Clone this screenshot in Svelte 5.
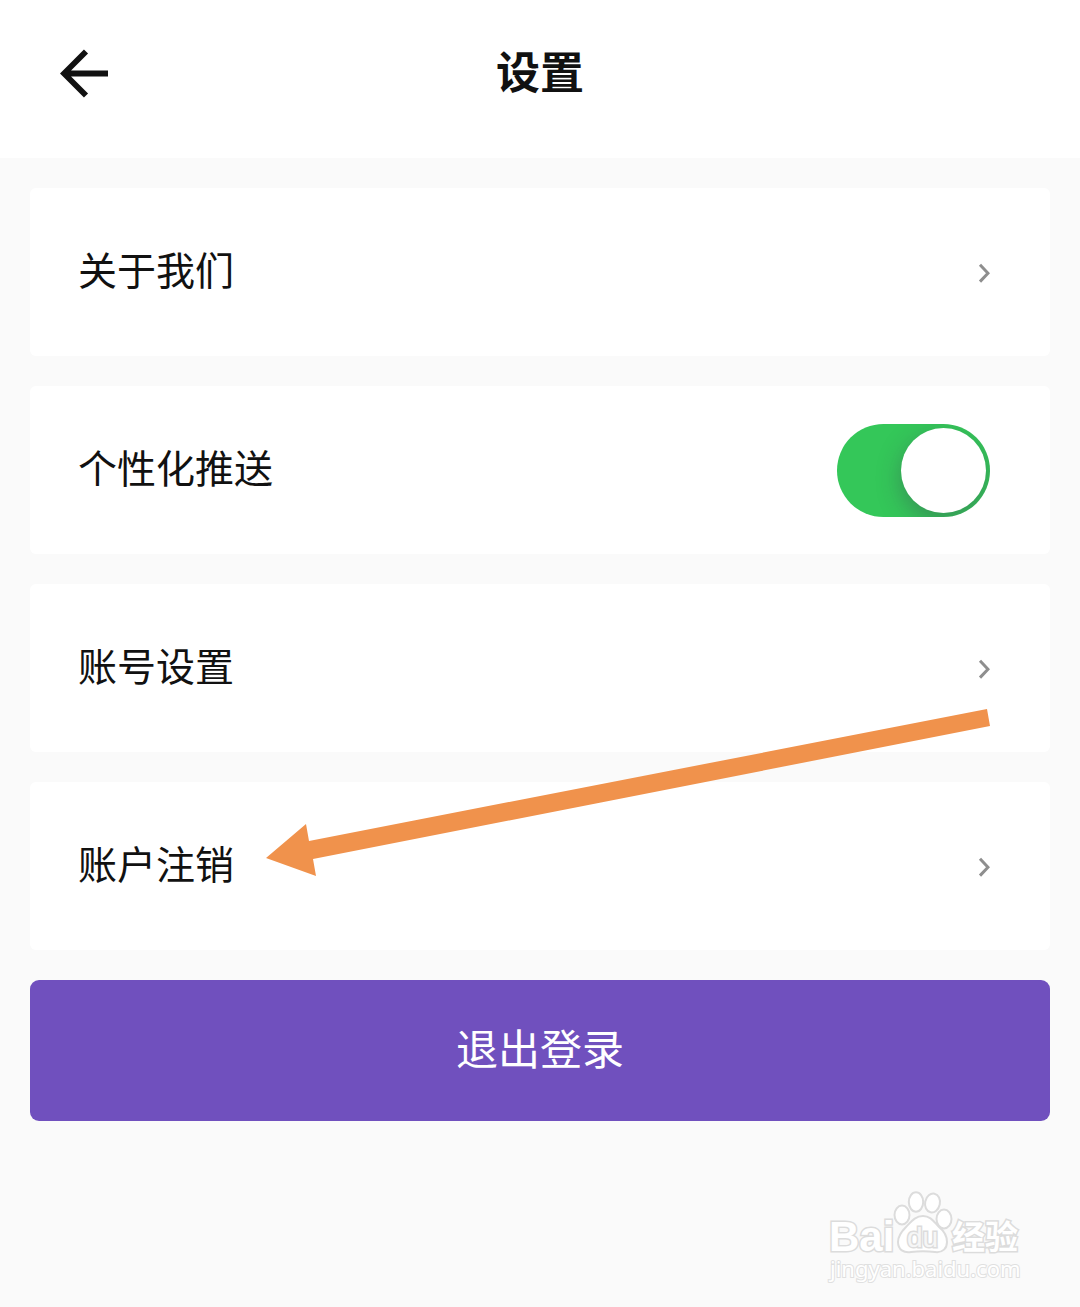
<script>
  let push = $state(true);
</script>

{#snippet linkRow(label)}
  <a class="row" href="#settings">
    <span>{label}</span>
    <svg class="chevron" width="14" height="24" viewBox="0 0 14 24" aria-hidden="true">
      <path d="M4 4.8 L12 13.2 L4 21.6" fill="none" stroke="#8e8e8e" stroke-width="3" />
    </svg>
  </a>
{/snippet}

<div class="page">
  <header>
    <button class="back" aria-label="返回">
      <svg width="50" height="50" viewBox="0 0 50 50" aria-hidden="true">
        <path d="M26 2.5 L4 24.5 L26 46.5 M4.5 24.5 H48" fill="none" stroke="#111" stroke-width="5.8" />
      </svg>
    </button>
    <h1>设置</h1>
  </header>

  <main>
    {@render linkRow('关于我们')}

    <label class="row">
      <span>个性化推送</span>
      <input class="switch" type="checkbox" role="switch" bind:checked={push} />
    </label>

    {@render linkRow('账号设置')}
    {@render linkRow('账户注销')}

    <button class="logout">退出登录</button>

    <svg class="pointer" width="728" height="174" viewBox="0 0 728 174" aria-hidden="true">
      <path d="M2 152 L42 118 L45 135 L723 3 L726 20 L49 153 L52 170 Z" fill="#f0924c" />
    </svg>
  </main>

  <footer>
    <svg class="watermark" width="200" height="100" viewBox="0 0 200 100" role="img" aria-label="Baidu 经验">
      <g class="brand">
        <text x="4" y="62">Bai</text>
        <ellipse cx="77" cy="26" rx="7.5" ry="9.5" />
        <ellipse cx="91" cy="13" rx="7.2" ry="9.8" />
        <ellipse cx="107.5" cy="14" rx="7.4" ry="9.5" transform="rotate(12 107.5 14)" />
        <ellipse cx="119" cy="30" rx="7.5" ry="9.5" />
        <path d="M98 27 C90 27 86 33 81 38 C76 43 73 48 73 53 C73 61 79 64 86 63 C94 62 102 62 110 63 C118 64 122 59 122 53 C122 47 119 42 114 38 C109 33 106 27 98 27 Z" />
        <text class="du" x="82" y="58">du</text>
        <text class="cn" x="127" y="60">经验</text>
      </g>
      <text class="domain" x="5" y="88">jingyan.baidu.com</text>
    </svg>
  </footer>
</div>

<style>
  :global(body) {
    margin: 0;
    background: #fafafa;
  }

  .page {
    font-family: "Noto Sans CJK SC", sans-serif;
    color: #111;
  }

  header {
    display: grid;
    grid-template-columns: 50px 1fr 50px;
    align-items: center;
    padding: 41px 60px 51px;
    background: #fff;
  }

  h1 {
    margin: 0;
    padding-bottom: 8px;
    font-size: 44px;
    font-weight: 700;
    line-height: 58px;
    text-align: center;
  }

  button {
    border: 0;
    font-family: inherit;
    cursor: pointer;
  }

  .back {
    height: 50px;
    padding: 0;
    background: none;
  }

  .back svg {
    display: block;
  }

  main {
    position: relative;
    display: flex;
    flex-direction: column;
    gap: 30px;
    padding: 30px;
  }

  .row {
    display: flex;
    align-items: center;
    justify-content: space-between;
    box-sizing: border-box;
    min-height: 168px;
    padding: 24px 60px 24px 48px;
    border-radius: 6px;
    background: #fff;
    color: inherit;
    font-size: 39px;
    line-height: 58px;
    text-decoration: none;
  }

  .row span {
    padding-bottom: 8px;
  }

  .switch {
    display: flex;
    align-items: center;
    box-sizing: border-box;
    width: 153px;
    height: 93px;
    margin: 0;
    padding: 4px;
    border-radius: 47px;
    appearance: none;
    background: #ccc;
    overflow: hidden;
    cursor: pointer;
  }

  .switch::before {
    content: "";
    width: 85px;
    height: 85px;
    border-radius: 50%;
    background: #fff;
    box-shadow: 0 8px 24px rgba(60, 40, 80, 0.35);
  }

  .switch:checked {
    justify-content: flex-end;
    background: #34c759;
  }

  .logout {
    min-height: 141px;
    padding-bottom: 8px;
    border-radius: 9px;
    background: #7050be;
    color: #fff;
    font-size: 42px;
    line-height: 58px;
  }

  .pointer {
    position: absolute;
    top: 548px;
    left: 264px;
    pointer-events: none;
  }

  footer {
    display: flex;
    justify-content: flex-end;
    padding: 38px 55px 0;
  }

  .watermark {
    display: block;
    overflow: visible;
  }

  .brand {
    fill: #fff;
    stroke: #dcdcdc;
    stroke-width: 2px;
    font-family: "Liberation Sans", sans-serif;
    font-size: 42px;
    font-weight: 700;
  }

  .brand text {
    stroke-width: 3px;
    paint-order: stroke;
  }

  .brand .du {
    fill: #f6f6f6;
    font-size: 28px;
    font-weight: 400;
  }

  .brand .cn {
    font-family: "Noto Sans CJK SC", sans-serif;
    font-size: 33px;
  }

  .domain {
    fill: #fff;
    stroke: #e0e0e0;
    stroke-width: 2px;
    font-family: "Noto Sans", sans-serif;
    font-size: 22px;
    paint-order: stroke;
  }
</style>
